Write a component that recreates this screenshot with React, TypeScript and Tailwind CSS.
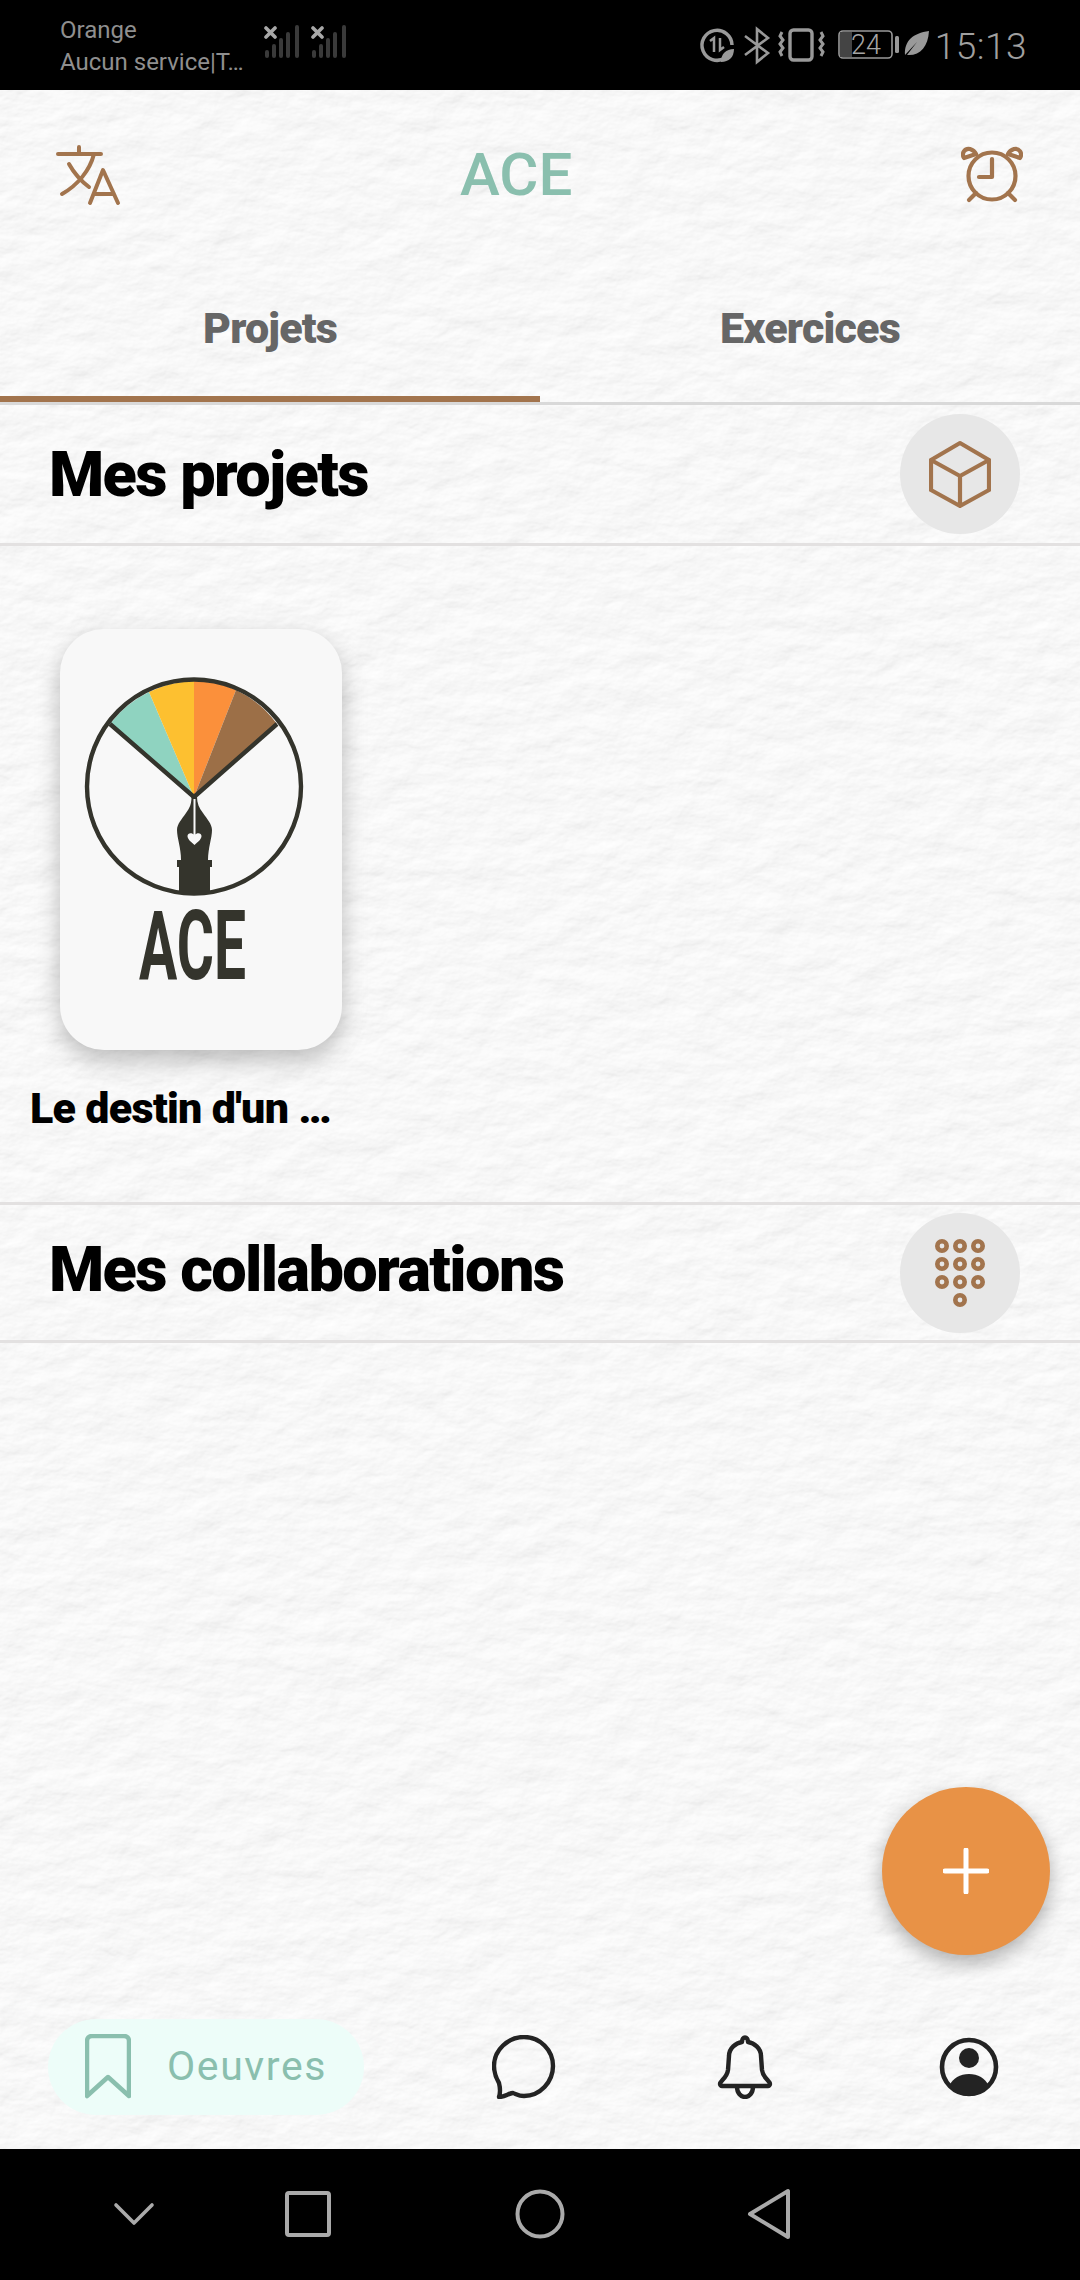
import React from "react";

const Paper = () => (
  <svg className="absolute inset-0 w-full h-full" width="1080" height="2280" aria-hidden="true">
    <filter id="paper" x="0" y="0" width="100%" height="100%">
      <feTurbulence type="fractalNoise" baseFrequency="0.024 0.04" numOctaves="5" seed="11" result="n" />
      <feDiffuseLighting in="n" lightingColor="#ffffff" surfaceScale="1.45" diffuseConstant="1.01">
        <feDistantLight azimuth="60" elevation="68" />
      </feDiffuseLighting>
    </filter>
    <rect width="1080" height="2280" filter="url(#paper)" />
  </svg>
);

const brown = "#a2744d";

const Signal = () => (
  <svg width="37" height="34" viewBox="0 0 37 34" fill="none" strokeLinecap="round">
    <path d="M2 3l9 9M11 3l-9 9" stroke="#a8a8a8" strokeWidth="3.6" />
    <path d="M3 27v4M10 21v10M17 15v16M24 9v22M33 2v29" stroke="#3a3a3a" strokeWidth="4" />
  </svg>
);

const StatusRight = () => (
  <svg viewBox="696 26 240 40" className="w-[240px] h-[40px]" fill="none" stroke="#999" strokeWidth="3">
    <path d="M726 59a15 15 0 1 1 7-13" strokeWidth="3.5" />
    <path d="M711 42l4-3v14M721 39v12l4-3" strokeWidth="2.5" />
    <path d="M722 63c0-8 5-13 13-13 0 8-5 13-13 13z" fill="#999" stroke="none" />
    <path d="M746 37l23 17-11 9V30l11 9-23 17" strokeWidth="2.6" />
    <path d="M783 33l-2 4 3 4-3 4 3 4-3 4 2 4M822 33l2 4-3 4 3 4-3 4 3 4-2 4" strokeWidth="3" />
    <rect x="791" y="31" width="22" height="30" rx="3.5" strokeWidth="3.4" />
    <rect x="840" y="32" width="53" height="27" rx="4" strokeWidth="1.6" />
    <rect x="841" y="33" width="12" height="25" fill="#444" stroke="none" />
    <text x="852" y="55" fontSize="27" fontWeight="300" fill="#a5a5a5" stroke="none" fontFamily="Roboto, sans-serif">24</text>
    <rect x="896" y="37" width="4" height="17" rx="1.5" fill="#999" stroke="none" />
    <path d="M906 56c-1-14 8-22 24-24-1 16-9 25-22 24l10-13z" fill="#999" stroke="none" />
  </svg>
);

const StatusBar = () => (
  <div className="relative z-10 h-[90px] bg-black flex items-center justify-between pl-[60px] pr-[53px] shrink-0">
    <div className="flex items-center">
      <div className="w-[204px] text-[24px] leading-[32px] text-[#8f8f8f] pt-[2px]">
        <div>Orange</div>
        <div>Aucun service|T…</div>
      </div>
      <div className="flex gap-[10px] mb-[6px]">
        <Signal />
        <Signal />
      </div>
    </div>
    <div className="flex items-center h-[40px]">
      <StatusRight />
      <span className="text-[37px] font-light text-[#a0a0a0] leading-none tracking-[0.5px] pt-[2px]">15:13</span>
    </div>
  </div>
);

const Translate = () => (
  <svg width="68" height="64" viewBox="54 142 68 64" fill="none" stroke={brown} strokeWidth="4" strokeLinecap="round" strokeLinejoin="round">
    <path d="M58 153h43M79 146v7M94 153c-4 16-16 31-32 40M69 163c5 9 12 17 20 23" />
    <path d="M90 202l13-33 15 33M94 193h20" />
  </svg>
);

const Alarm = () => (
  <svg width="62" height="58" viewBox="962 146 62 58" fill="none" stroke={brown} strokeWidth="4.2" strokeLinecap="round" strokeLinejoin="round">
    <circle cx="993" cy="176" r="23.5" />
    <path d="M993 159v18h-13M977 193l-7 7M1009 193l7 7" />
    <path d="M965 158c-3-5 1-10 6-9 3 1 5 3 6 5zM1021 158c3-5-1-10-6-9-3 1-5 3-6 5z" />
  </svg>
);

const Cube = () => (
  <svg width="62" height="68" viewBox="929 442 62 68" fill="none" stroke={brown} strokeWidth="4.2" strokeLinecap="round" strokeLinejoin="round">
    <path d="M960 445l29 17v30l-29 16-29-16v-30zM931 462l29 16 29-16M960 478v30" />
  </svg>
);

const Keypad = () => (
  <svg width="56" height="74" viewBox="0 0 56 74" fill="none" stroke={brown} strokeWidth="4.6">
    {[10, 28, 46].flatMap((y) =>
      [10, 28, 46].map((x) => <circle key={`${x}-${y}`} cx={x} cy={y} r="4.7" />)
    )}
    <circle cx="28" cy="64" r="4.7" />
  </svg>
);

const SectionHeader = ({ title, icon, height, titleGap }: { title: string; icon: React.ReactNode; height: string; titleGap: string }) => (
  <div className={`${height} shrink-0 flex items-center justify-between pl-[49px] pr-[60px] border-b-[3px] border-[#e3e1e1]`}>
    <h2 className={`${titleGap} text-[63px] font-black tracking-[-1.6px] text-black leading-none`}>{title}</h2>
    <div className="w-[120px] h-[120px] rounded-full bg-[#e7e7e7] flex items-center justify-center">{icon}</div>
  </div>
);

const Logo = () => (
  <svg viewBox="60 629 282 421" className="w-full h-full">
    <path d="M194 797L110 724A107 107 0 0 1 149 692z" fill="#8fd3c0" />
    <path d="M194 797L149 692A107 107 0 0 1 194 681z" fill="#fdc030" />
    <path d="M194 797V681A107 107 0 0 1 236 690z" fill="#fb903b" />
    <path d="M194 797L236 690A107 107 0 0 1 277 724z" fill="#9c6f47" />
    <circle cx="194" cy="786.5" r="107" fill="none" stroke="#34342c" strokeWidth="4.4" />
    <path d="M110 724L194 797L277 724" fill="none" stroke="#34342c" strokeWidth="4.4" />
    <path d="M191.5 797C191.5 803 190 808 186 813C182 819 177 824 177 830C177 838 181 848 181 860H177V867H179V893H210V867H212V860H208C208 848 212 838 212 830C212 824 207 819 203 813C199 808 197 803 197 797Z" fill="#34342c" />
    <path d="M194.5 799V836" stroke="#f8f8f8" strokeWidth="2" />
    <path d="M194.5 845C190 841 187.5 839 187.5 836C187.5 833 191.5 832 194.5 835C197.5 832 201.5 833 201.5 836C201.5 839 199 841 194.5 845Z" fill="#f8f8f8" />
    <text x="139" y="979" fontSize="96" fontWeight="700" fill="#34342c" textLength="107" lengthAdjust="spacingAndGlyphs" fontFamily="Roboto, sans-serif">ACE</text>
  </svg>
);

const BottomNav = () => (
  <div className="h-[150px] flex items-center pl-[48px] pb-[14px] shrink-0">
    <div className="w-[316px] h-[96px] rounded-[48px] bg-[#edfdf9] flex items-center pl-[37px] gap-[36px]">
      <svg width="46" height="66" viewBox="0 0 46 66" fill="none" stroke="#8abfae" strokeWidth="4.5" strokeLinejoin="round">
        <path d="M2 62V7c0-3 2-5 5-5h32c3 0 5 2 5 5v55L23 43z" />
      </svg>
      <span className="text-[41px] tracking-[1.6px] text-[#8abfae] leading-none mb-[2px]">Oeuvres</span>
    </div>
    <div className="ml-[128px] w-[64px] flex justify-center">
      <svg width="64" height="64" viewBox="0 0 64 64" fill="none" stroke="#232323" strokeWidth="4.4" strokeLinejoin="round">
        <path d="M32 2c16 0 29 13 29 29S48 61 32 61c-5 0-8-2-11-3-4 0-8 4-14 4 2-6 1-10 0-14C4 43 2 37 2 31 2 15 16 2 32 2z" />
      </svg>
    </div>
    <div className="ml-[157px] w-[64px] flex justify-center">
      <svg width="58" height="64" viewBox="0 0 58 64" fill="none" stroke="#232323" strokeWidth="4.4" strokeLinejoin="round" strokeLinecap="round">
        <path d="M4 49c0-3 7-6 8-14l1-14C13 13 20 8 26 7c0-6 6-6 6 0 6 1 13 6 13 14l1 14c1 8 8 11 8 14 0 1-1 2-2 2H6c-1 0-2-1-2-2z" />
        <path d="M21 52c0 6 4 10 8 10s8-4 8-10" />
      </svg>
    </div>
    <div className="ml-[160px] w-[64px] flex justify-center">
      <svg width="60" height="60" viewBox="0 0 60 60" fill="none">
        <circle cx="30" cy="30" r="27" stroke="#232323" strokeWidth="4.6" />
        <circle cx="30" cy="21" r="10" fill="#232323" />
        <path d="M10 49c4-8 11-12 20-12s16 4 20 12c-5 6-12 10-20 10s-15-4-20-10z" fill="#232323" />
      </svg>
    </div>
  </div>
);

const NavBar = () => (
  <div className="relative z-10 h-[131px] bg-black shrink-0 flex items-center pl-[113px] pb-[2px]">
    <svg width="42" height="26" viewBox="0 0 42 26" fill="none" stroke="#aaa" strokeWidth="3.6" strokeLinecap="round" strokeLinejoin="round">
      <path d="M3 4l18 18L39 4" />
    </svg>
    <svg width="46" height="46" viewBox="0 0 46 46" fill="none" stroke="#aaa" strokeWidth="4" strokeLinejoin="round" className="ml-[130px]">
      <rect x="2" y="2" width="42" height="42" rx="2" />
    </svg>
    <svg width="50" height="50" viewBox="0 0 50 50" fill="none" stroke="#aaa" strokeWidth="4" className="ml-[184px]">
      <circle cx="25" cy="25" r="22.5" />
    </svg>
    <svg width="44" height="52" viewBox="0 0 44 52" fill="none" stroke="#aaa" strokeWidth="4" strokeLinejoin="round" className="ml-[182px]">
      <path d="M41 3v46L3 26z" />
    </svg>
  </div>
);

export default function App() {
  return (
    <div className="relative w-[1080px] h-[2280px] overflow-hidden flex flex-col bg-[#f3f3f3] font-['Roboto',sans-serif]">
      <Paper />
      <StatusBar />
      <div className="relative flex-1 flex flex-col min-h-0">
        <header className="h-[170px] flex items-center pl-[54px] pr-[57px] shrink-0">
          <Translate />
          <h1 className="ml-[338px] text-[60px] font-medium text-[#8abfae] leading-none">ACE</h1>
          <div className="flex-1" />
          <Alarm />
        </header>
        <div className="h-[145px] flex shrink-0 border-b-[3px] border-[#d9d9d9]">
          <div className="w-[540px] flex items-center justify-center border-b-[6px] border-[#a2744d]">
            <span className="text-[43px] font-black tracking-[-0.8px] text-[#666]">Projets</span>
          </div>
          <div className="w-[540px] flex items-center justify-center pb-[6px]">
            <span className="text-[43px] font-black tracking-[-0.8px] text-[#666]">Exercices</span>
          </div>
        </div>
        <SectionHeader title="Mes projets" icon={<Cube />} height="h-[141px]" titleGap="mb-[0px]" />
        <div className="h-[659px] shrink-0 pt-[83px] border-b-[3px] border-[#e3e1e1]">
          <div className="ml-[60px] w-[282px] h-[421px] rounded-[44px] bg-[#f8f8f8] shadow-[0_10px_24px_rgba(0,0,0,0.25)] overflow-hidden">
            <Logo />
          </div>
          <p className="ml-[30px] mt-[34px] text-[43px] font-black tracking-[-0.7px] leading-[48px] text-black">Le destin d'un …</p>
        </div>
        <SectionHeader title="Mes collaborations" icon={<Keypad />} height="h-[138px]" titleGap="mb-[6px]" />
        <div className="flex-1" />
        <BottomNav />
      </div>
      <NavBar />
      <button className="absolute left-[882px] top-[1787px] w-[168px] h-[168px] rounded-full bg-[#e89246] shadow-[0_8px_20px_rgba(0,0,0,0.3)] flex items-center justify-center">
        <svg width="46" height="46" viewBox="0 0 46 46" fill="none" stroke="#fff" strokeWidth="5" strokeLinecap="round">
          <path d="M23 2v42M2 23h42" />
        </svg>
      </button>
    </div>
  );
}
